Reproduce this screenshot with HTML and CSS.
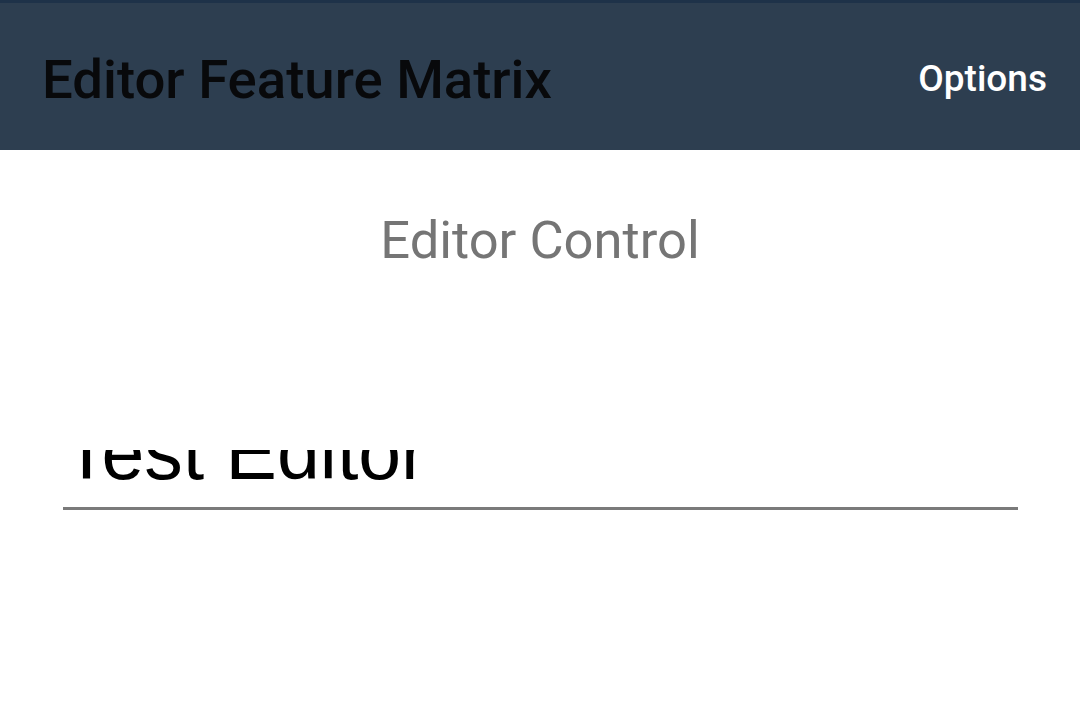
FILE: index.html
```html
<!DOCTYPE html>
<html>
<head>
<meta charset="utf-8">
<link rel="stylesheet" href="styles.css">
</head>
<body>
<header class="toolbar">
  <h1 class="toolbar-title">Editor Feature Matrix</h1>
  <span class="toolbar-action">Options</span>
</header>
<main class="content">
  <h2 class="section-title">Editor Control</h2>
  <div class="field">
    <div class="field-clip">
      <div class="field-text">Test Editor</div>
    </div>
  </div>
</main>
</body>
</html>
```
FILE: styles.css
```css
html, body {
  margin: 0;
  padding: 0;
  background: #ffffff;
  width: 1080px;
  height: 710px;
  overflow: hidden;
}
body {
  font-family: Roboto, "Noto Sans", sans-serif;
}
.toolbar {
  box-sizing: border-box;
  height: 150px;
  border-top: 3px solid #1e3249;
  background: #2d3e50;
  display: flex;
  align-items: center;
  justify-content: space-between;
  padding: 4px 33px 0 42px;
}
.toolbar-title {
  margin: 0;
  font-size: 54.5px;
  line-height: 62px;
  font-weight: 500;
  color: #08090b;
}
.toolbar-action {
  font-size: 37px;
  line-height: 44px;
  font-weight: 500;
  color: #ffffff;
}
.content {
  display: flex;
  flex-direction: column;
}
.section-title {
  margin: 60px 0 0;
  text-align: center;
  font-size: 52.5px;
  line-height: 60px;
  font-weight: 400;
  color: #757575;
}
.field {
  margin: 180px 62px 0 63px;
  border-bottom: 3px solid #7a7a7a;
}
.field-clip {
  height: 57px;
  overflow: hidden;
}
.field-text {
  margin-top: -34px;
  font-family: "Liberation Sans", Arial, sans-serif;
  font-size: 77px;
  line-height: 72px;
  color: #000000;
  white-space: nowrap;
}
```
